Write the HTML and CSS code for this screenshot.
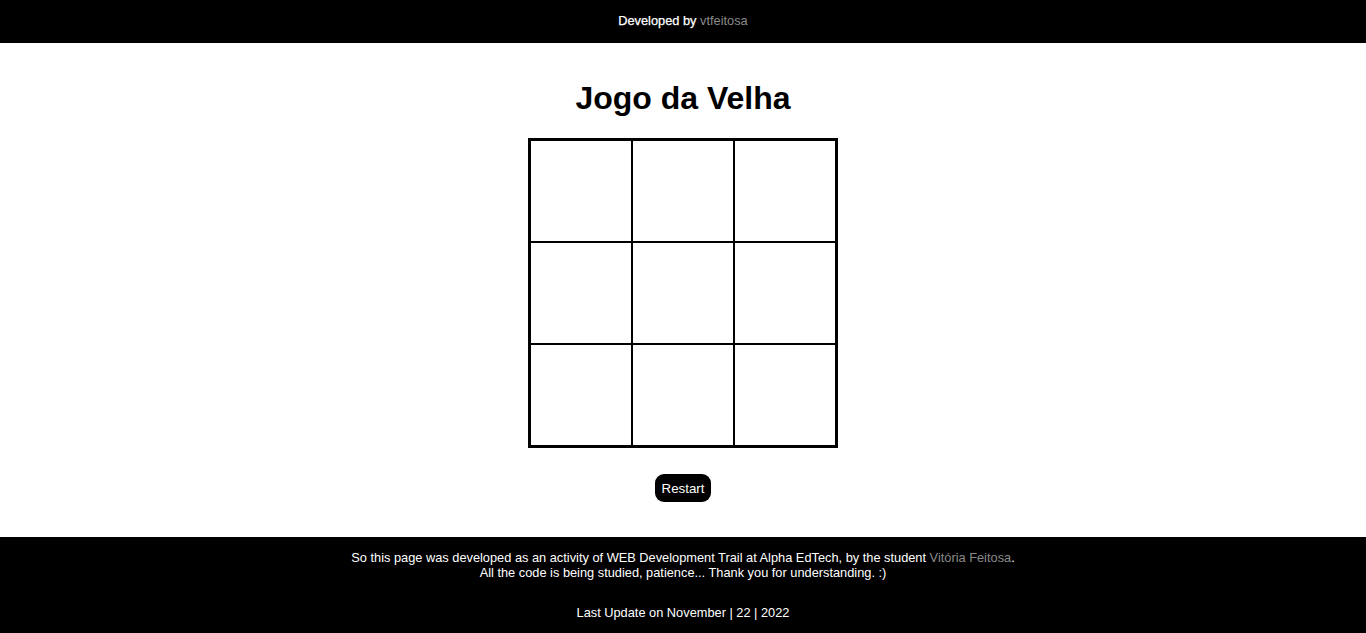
FILE: index.html
```html
<!DOCTYPE html>
<html lang="pt-BR">
<head>
<meta charset="utf-8">
<title>Jogo da Velha</title>
<link rel="stylesheet" href="styles.css">
</head>
<body>
<header class="top-bar">
  <p class="dev">Developed by <a class="muted-link" href="#">vtfeitosa</a></p>
</header>
<main class="game">
  <h1 class="title">Jogo da Velha</h1>
  <div class="board">
    <div class="cell"></div>
    <div class="cell"></div>
    <div class="cell"></div>
    <div class="cell"></div>
    <div class="cell"></div>
    <div class="cell"></div>
    <div class="cell"></div>
    <div class="cell"></div>
    <div class="cell"></div>
  </div>
  <button class="restart" type="button">Restart</button>
</main>
<footer class="bottom-bar">
  <p class="about">So this page was developed as an activity of WEB Development Trail at Alpha EdTech, by the student <a class="muted-link" href="#">Vitória Feitosa</a>.<br>All the code is being studied, patience... Thank you for understanding. :)</p>
  <p class="update">Last Update on November | 22 | 2022</p>
</footer>
</body>
</html>
```
FILE: styles.css
```css
* { box-sizing: border-box; }

html, body {
  margin: 0;
  padding: 0;
  background: #fff;
  font-family: "Liberation Sans", Arial, sans-serif;
}

.top-bar {
  background: #000;
  color: #fff;
  height: 43px;
  display: flex;
  align-items: center;
  justify-content: center;
}

.dev {
  margin: 0;
  font-size: 12.8px;
  line-height: 15px;
  padding-bottom: 3px;
  font-weight: 500;
  -webkit-text-stroke: 0.25px #fff;
}

.dev .muted-link { -webkit-text-stroke: 0; }

.muted-link {
  color: #8a8a8a;
  text-decoration: none;
}

.game {
  display: flex;
  flex-direction: column;
  align-items: center;
  padding-top: 37px;
  padding-bottom: 35px;
}

.title {
  margin: 0 0 21px;
  font-size: 32px;
  line-height: 37px;
  font-weight: bold;
  color: #000;
}

.board {
  display: grid;
  grid-template-columns: repeat(3, 100px);
  grid-template-rows: repeat(3, 100px);
  gap: 2px;
  padding: 3px;
  background: #000;
}

.cell {
  background: #fff;
}

.restart {
  margin-top: 26px;
  background: #000;
  color: #fff;
  border: none;
  border-radius: 9px;
  font-family: "Liberation Sans", Arial, sans-serif;
  font-size: 13.333px;
  line-height: 16px;
  padding: 7px 7px 5px;
  height: 28px;
  cursor: pointer;
}

.bottom-bar {
  background: #000;
  color: #fff;
  text-align: center;
  font-size: 12.8px;
  padding: 13px 0 12px;
  min-height: 96px;
}

.about {
  margin: 0;
  line-height: 15px;
}

.update {
  margin: 25px 0 0;
  line-height: 15px;
}
```
